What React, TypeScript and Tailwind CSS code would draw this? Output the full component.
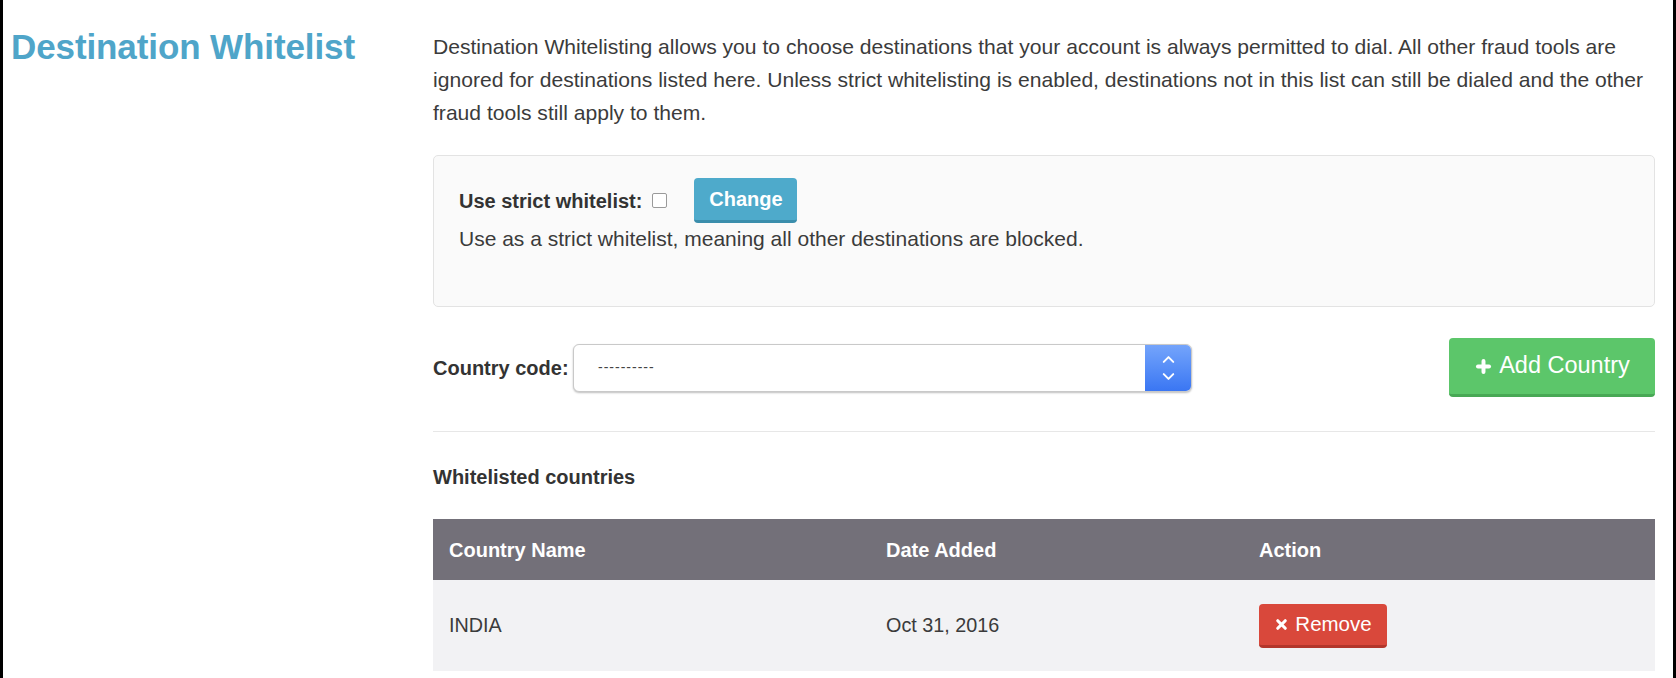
import { Plus, X, ChevronUp, ChevronDown } from 'lucide-react';

const font = { fontFamily: '"Liberation Sans", Arial, sans-serif' };

// Destination whitelist settings page
export default function App() {
  return (
    <div
      className="h-[678px] w-full bg-white border-x-[3px] border-black flex text-[#3b3b3b]"
      style={font}
    >
      {/* Title column */}
      <div className="w-[430px] shrink-0 pl-[8px] pt-[27px]">
        <h1 className="text-[35px] leading-[40px] font-bold text-[#4fa5c9] tracking-[-0.1px]">
          Destination Whitelist
        </h1>
      </div>

      {/* Content column */}
      <div className="w-[1222px] shrink-0 pt-[30px]">
        <p className="text-[21.1px] leading-[33px] whitespace-nowrap">
          Destination Whitelisting allows you to choose destinations that your account is always permitted to dial. All other fraud tools are
          <br />
          ignored for destinations listed here. Unless strict whitelisting is enabled, destinations not in this list can still be dialed and the other
          <br />
          fraud tools still apply to them.
        </p>

        {/* Strict whitelist box */}
        <div className="mt-[26px] h-[152px] rounded-[5px] border border-[#e3e3e3] bg-[#fafafa] px-[25px] pt-[22px]">
          <div className="flex items-center h-[45px]">
            <span className="text-[20px] font-bold text-[#333]">Use strict whitelist:</span>
            <span className="ml-[10px] w-[15px] h-[15px] border border-[#9a9a9a] rounded-[2px] bg-white" />
            <button className="ml-[27px] w-[103px] h-[45px] rounded-[4px] bg-[#4eaacb] border-b-[3px] border-[#3b8eac] text-white text-[20px] font-bold">
              Change
            </button>
          </div>
          <div className="mt-[4px] text-[21px] leading-[24px]">
            Use as a strict whitelist, meaning all other destinations are blocked.
          </div>
        </div>

        {/* Country code row */}
        <div className="mt-[31px] h-[59px] flex items-center justify-between">
          <div className="flex items-center">
            <label className="text-[20px] font-bold text-[#333] w-[140px]">Country code:</label>
            <div className="w-[619px] h-[48px] flex rounded-[6px] border border-[#c9c9c9] shadow-[0_1px_2px_rgba(0,0,0,0.25)] bg-white overflow-hidden">
              <div className="flex-1 flex items-center pl-[24px] text-[14px] text-[#444] tracking-[1px]">----------</div>
              <div className="w-[46px] flex flex-col items-center justify-center bg-gradient-to-b from-[#74a4fb] to-[#3a76f3] text-white">
                <ChevronUp className="w-[19px] h-[19px] -mb-[1px]" strokeWidth={2.5} />
                <ChevronDown className="w-[19px] h-[19px] -mt-[1px]" strokeWidth={2.5} />
              </div>
            </div>
          </div>
          <button className="w-[206px] h-[59px] rounded-[4px] bg-[#5cc66a] border-b-[3px] border-[#48a855] text-white text-[23.5px] flex items-center justify-center gap-[6px]">
            <Plus className="w-[19px] h-[19px]" strokeWidth={5} />
            Add Country
          </button>
        </div>

        <div className="mt-[34px] border-t border-[#e7e7e7]" />

        <div className="mt-[33px] text-[20px] leading-[24px] font-bold text-[#333]">Whitelisted countries</div>

        {/* Table */}
        <table className="mt-[30px] w-full border-collapse text-[19.8px]">
          <thead>
            <tr className="bg-[#737079] text-white h-[61px] text-[20px]">
              <th className="w-[437px] text-left font-bold pl-[16px]">Country Name</th>
              <th className="w-[373px] text-left font-bold pl-[16px]">Date Added</th>
              <th className="text-left font-bold pl-[16px]">Action</th>
            </tr>
          </thead>
          <tbody>
            <tr className="bg-[#f2f2f4] h-[91px]">
              <td className="pl-[16px]">INDIA</td>
              <td className="pl-[16px]">Oct 31, 2016</td>
              <td className="pl-[16px]">
                <button className="w-[128px] h-[44px] rounded-[4px] bg-[#d9483b] border-b-[3px] border-[#b3362b] text-white text-[20.5px] flex items-center justify-center gap-[6px]">
                  <X className="w-[15px] h-[15px]" strokeWidth={5} />
                  Remove
                </button>
              </td>
            </tr>
          </tbody>
        </table>
      </div>
    </div>
  );
}
